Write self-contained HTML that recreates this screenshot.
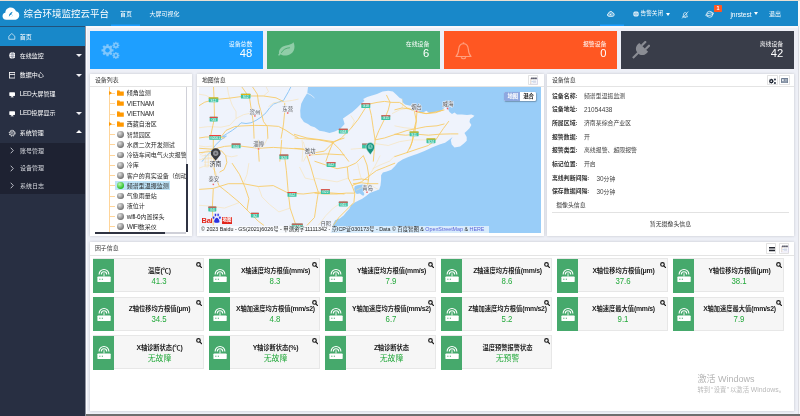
<!DOCTYPE html>
<html lang="zh-CN">
<head>
<meta charset="utf-8">
<title>综合环境监控云平台</title>
<style>
*{box-sizing:border-box;margin:0;padding:0}
html,body{width:800px;height:416px;overflow:hidden;background:#eef0f7;font-family:"Liberation Sans","Noto Sans CJK SC",sans-serif;color:#333;font-size:5.83px;line-height:1}
.abs,.abs *{position:absolute}
#root{position:relative;width:800px;height:416px;overflow:hidden;background:#eef0f7;will-change:transform}
#root>*{position:absolute}
.t{position:absolute;white-space:nowrap}
/* header */
#topline{left:0;top:0;width:800px;height:1px;background:#e9dfd2}
#header{left:0;top:1px;width:798px;height:25px;background:#1888c9}
#header .t{color:#fff}
#title{left:23.6px;top:7.6px;font-size:9.5px;color:#fff}
.nav{font-size:6px;top:9.7px}
/* sidebar */
#side{left:0;top:26px;width:85px;height:390px;background:#282f42}
#side .t{color:#fff;font-size:6px}
#side .act{position:absolute;left:0;top:0;width:85px;height:20px;background:#1888c9}
#side .sub{position:absolute;left:0;top:116.5px;width:85px;height:51px;background:#1e2232}
/* cards */
.card{top:31px;height:37.6px;width:173px}
.card .lab{position:absolute;right:10.8px;top:10.6px;font-size:5.9px;color:#fff;white-space:nowrap}
.card .num{position:absolute;right:10.9px;top:17.2px;font-size:11.2px;color:#fff;white-space:nowrap}
/* panels */
.panel{background:#fff;box-shadow:0 0 2.6px rgba(50,50,55,.22)}
.panel .hd{position:absolute;left:0;top:0;right:0;height:13px;border-bottom:0.5px solid #e4e4e4}
.panel .hd .t{left:4.8px;top:4.1px;font-size:5.9px;color:#333}
.hbtn{position:absolute;width:10px;height:9.6px;border:0.5px solid #e2e2e2;border-radius:0.8px;background:#fff}
</style>
</head>
<body>
<div id="root">
<!--MAINBG-->
<div id="rightstrip" style="left:798px;top:1px;width:2px;height:415px;background:#f8f8f8"></div><div style="left:798px;top:26px;width:1px;height:390px;background:#dcdde3"></div>
<div id="topline"></div>
<div id="header">
  <svg style="position:absolute;left:2.4px;top:6.4px" width="17.8" height="13.2" viewBox="0 0 34 26">
    <path d="M8 25 C3 25 0.5 21.5 0.5 18 C0.5 14.5 3 12 6 11.5 C6 5.5 10.5 1 16.5 1 C21.5 1 25.5 4 27 8.5 C31 9 33.5 12.5 33.5 16.5 C33.5 21.5 30 25 26 25 Z" fill="#fff"/>
    <path d="M13 19 C13 14 16 10.5 21 9.5 C19 11.5 18 13 18.5 15 C17 15 15 16.5 13 19 Z" fill="#1888c9"/>
    <path d="M16 19.5 C18.5 19 20.5 17 21 14.5 C21.5 17 20 19.5 16 19.5 Z" fill="#5bb0e0"/>
  </svg>
  <div class="t" id="title">综合环境监控云平台</div>
  <div class="t nav" style="left:120px">首页</div>
  <div class="t nav" style="left:149.5px">大屏可视化</div>
  <div style="position:absolute;left:111px;top:23px;width:29px;height:1px;background:#1b93e2"></div><div style="position:absolute;left:111px;top:24px;width:29px;height:1px;background:#1e9fff"></div>
  <div style="position:absolute;left:600px;top:23px;width:24px;height:1px;background:#1b93e2"></div><div style="position:absolute;left:600px;top:24px;width:24px;height:1px;background:#1e9fff"></div>
  <!-- cloud icon -->
  <svg style="position:absolute;left:607.4px;top:10.2px" width="7.6" height="5.9" viewBox="0 0 18 14" fill="rgba(255,255,255,.3)" stroke="#fff" stroke-width="2.1">
    <path d="M4.5 12.5 C2.5 12.5 1 11 1 9 C1 7.2 2.3 6 4 5.8 C4.3 3 6.3 1.2 9 1.2 C11.3 1.2 13.2 2.6 13.8 4.8 C15.8 5 17 6.5 17 8.5 C17 10.8 15.5 12.5 13.5 12.5 Z"/>
    <circle cx="8" cy="8" r="1.6" fill="#fff" stroke="none"/><circle cx="11.5" cy="7" r="1" fill="#fff" stroke="none"/>
  </svg>
  <!-- globe + alarm -->
  <svg style="position:absolute;left:632.5px;top:10.3px" width="6" height="6" viewBox="0 0 12 12"><circle cx="6" cy="6" r="5.5" fill="#fff"/><path d="M0.5 6h11M6 0.5c-3 3-3 8 0 11M6 0.5c3 3 3 8 0 11" stroke="#1888c9" stroke-width="0.9" fill="none"/></svg>
  <div class="t nav" style="left:640.6px;font-size:5.65px;top:10px">告警关闭</div>
  <div style="position:absolute;left:666.4px;top:11.9px;width:0;height:0;border-left:2.9px solid transparent;border-right:2.9px solid transparent;border-top:3.1px solid #fff"></div>
  <!-- bell slash -->
  <svg style="position:absolute;left:680.8px;top:9.6px" width="8" height="8" viewBox="0 0 18 18" fill="none" stroke="#fff" stroke-width="1.5" stroke-linecap="round"><path d="M4.5 12.5 C5.5 11 5.5 9 5.8 7 C6.2 4.8 7.5 3.5 9.5 3.5 C11.5 3.5 12.7 5 12.8 7 C12.9 9 13 11 14 12.5 Z"/><path d="M8 14.5 C8.5 15.5 10 15.5 10.5 14.5"/><path d="M3 16 L15.5 2"/></svg>
  <!-- planet -->
  <svg style="position:absolute;left:704.6px;top:9px" width="9.4" height="8.6" viewBox="0 0 22 20" fill="none" stroke="#fff" stroke-width="1.7"><circle cx="11" cy="10" r="7"/><ellipse cx="11" cy="10" rx="10" ry="2.6" transform="rotate(-14 11 10)" stroke-width="1.4"/></svg>
  <div style="position:absolute;left:714.1px;top:4px;width:8px;height:7.2px;background:#ff5722;border-radius:0.8px"></div>
  <div class="t" style="left:716.6px;top:5px;font-size:5.4px;font-weight:bold">1</div>
  <div class="t nav" style="left:730.4px;font-size:6.6px;top:10.9px">jnrstest</div>
  <div style="position:absolute;left:754.2px;top:11.4px;width:0;height:0;border-left:2.9px solid transparent;border-right:2.9px solid transparent;border-top:3.1px solid #fff"></div>
  <div class="t nav" style="left:769px">退出</div>
</div>
<div id="side">
  <div style="position:absolute;left:0;top:0;width:85px;height:1.2px;background:#21527c"></div><div style="position:absolute;left:0;top:1.1px;width:85px;height:18.7px;background:#1888c9"></div>
  <div class="sub"></div>
  <!-- icons -->
  <svg style="position:absolute;left:8.2px;top:7px" width="7.6" height="7" viewBox="0 0 15 14" fill="none" stroke="#fff" stroke-width="1.3" stroke-linejoin="round"><path d="M1.5 6.5 L7.5 1 L13.5 6.5 V12.5 H1.5 Z"/></svg>
  <svg style="position:absolute;left:8.6px;top:26.4px" width="6.8" height="6.8" viewBox="0 0 12 12"><circle cx="6" cy="6" r="5.6" fill="#fff"/><path d="M0.5 4h11M0.5 8h11M6 0.5c-2.6 3-2.6 8 0 11M6 0.5c2.6 3 2.6 8 0 11M6 0.5v11" stroke="#596078" stroke-width="0.65" fill="none"/></svg>
  <svg style="position:absolute;left:8.8px;top:46.2px" width="6.6" height="6.6" viewBox="0 0 12 12" fill="none" stroke="#fff" stroke-width="1.5"><rect x="1" y="1" width="10" height="10"/><path d="M1 4.5h10"/></svg>
  <svg style="position:absolute;left:8.8px;top:65.9px" width="6.3" height="5.7" viewBox="0 0 14 13"><rect x="0.5" y="0.5" width="13" height="8.5" rx="1" fill="#fff"/><rect x="5" y="9" width="4" height="2" fill="#fff"/><rect x="3.5" y="10.8" width="7" height="1.4" fill="#fff"/></svg>
  <svg style="position:absolute;left:8.8px;top:85.1px" width="6.3" height="5.7" viewBox="0 0 14 13"><rect x="0.5" y="0.5" width="13" height="8.5" rx="1" fill="#fff"/><rect x="5" y="9" width="4" height="2" fill="#fff"/><rect x="3.5" y="10.8" width="7" height="1.4" fill="#fff"/></svg>
  <svg style="position:absolute;left:7.7px;top:102.8px" width="8.4" height="8.4" viewBox="0 0 16 16" fill="none" stroke="#fff"><circle cx="8" cy="8" r="5.6" stroke-width="1.8" stroke-dasharray="2.4 2"/><circle cx="8" cy="8" r="4.3" stroke-width="1.2"/><circle cx="8" cy="8" r="1.7" stroke-width="1"/></svg>
  <div class="t" style="left:19.8px;top:7.6px">首页</div>
  <div class="t" style="left:19.8px;top:26.9px">在线监控</div>
  <div class="t" style="left:19.8px;top:46.2px">数据中心</div>
  <div class="t" style="left:19.8px;top:65.1px"><span style="font-size:6.5px;letter-spacing:-0.35px">LED</span>大屏管理</div>
  <div class="t" style="left:19.8px;top:84.3px"><span style="font-size:6.5px;letter-spacing:-0.35px">LED</span>投屏显示</div>
  <div class="t" style="left:19.8px;top:103.8px">系统管理</div>
  <div class="t" style="left:20px;top:122.2px;color:#d4d6dc">账号管理</div>
  <div class="t" style="left:20px;top:139.4px;color:#d4d6dc">设备管理</div>
  <div class="t" style="left:20px;top:156.6px;color:#d4d6dc">系统日志</div>
  <svg style="position:absolute;left:10px;top:121.4px" width="4" height="7" viewBox="0 0 8 14" fill="none" stroke="#e0e2e8" stroke-width="1.6"><path d="M1.5 1.5 L6.5 7 L1.5 12.5"/></svg>
  <svg style="position:absolute;left:10px;top:138.6px" width="4" height="7" viewBox="0 0 8 14" fill="none" stroke="#e0e2e8" stroke-width="1.6"><path d="M1.5 1.5 L6.5 7 L1.5 12.5"/></svg>
  <svg style="position:absolute;left:10px;top:155.8px" width="4" height="7" viewBox="0 0 8 14" fill="none" stroke="#e0e2e8" stroke-width="1.6"><path d="M1.5 1.5 L6.5 7 L1.5 12.5"/></svg>
  <div style="position:absolute;left:75.6px;top:28.4px;width:0;height:0;border-left:3.1px solid transparent;border-right:3.1px solid transparent;border-top:3.2px solid #f0f0f4"></div>
  <div style="position:absolute;left:75.6px;top:47.6px;width:0;height:0;border-left:3.1px solid transparent;border-right:3.1px solid transparent;border-top:3.2px solid #f0f0f4"></div>
  <div style="position:absolute;left:75.6px;top:86.0px;width:0;height:0;border-left:3.1px solid transparent;border-right:3.1px solid transparent;border-top:3.2px solid #f0f0f4"></div>
  <div style="position:absolute;left:75.6px;top:104.4px;width:0;height:0;border-left:3.1px solid transparent;border-right:3.1px solid transparent;border-bottom:3.2px solid #fff"></div>
</div>
<div style="left:85px;top:26px;width:0.6px;height:390px;background:#8f93a0"></div><div style="left:85.6px;top:26px;width:1.7px;height:390px;background:#fbfbfe"></div>
<div style="left:86.4px;top:26px;width:711.6px;height:2.4px;background:#f8f8fb"></div>
<div class="card" style="left:90.2px;background:#1e9fff">
  <svg style="position:absolute;left:10.4px;top:10px" width="20" height="19" viewBox="0 0 20 19">
    <g transform="translate(6.5 9.3)"><g stroke="#7fc6fc" stroke-width="2.3"><path d="M0 -6V6M-6 0H6M-4.25 -4.25L4.25 4.25M-4.25 4.25L4.25 -4.25"/></g><circle r="4.6" fill="#7fc6fc"/><circle r="2.2" fill="#1e9fff"/></g>
    <g transform="translate(14.9 4.3)"><g stroke="#7fc6fc" stroke-width="1.3"><path d="M0 -3.5V3.5M-3.5 0H3.5M-2.5 -2.5L2.5 2.5M-2.5 2.5L2.5 -2.5"/></g><circle r="2.6" fill="#7fc6fc"/><circle r="1.15" fill="#1e9fff"/></g>
    <g transform="translate(14.9 14.5)"><g stroke="#7fc6fc" stroke-width="1.3"><path d="M0 -3.5V3.5M-3.5 0H3.5M-2.5 -2.5L2.5 2.5M-2.5 2.5L2.5 -2.5"/></g><circle r="2.6" fill="#7fc6fc"/><circle r="1.15" fill="#1e9fff"/></g>
  </svg>
  <div class="lab">设备总数</div><div class="num">48</div>
</div>
<div class="card" style="left:267.2px;background:#46a96c">
  <svg style="position:absolute;left:9.6px;top:11.2px" width="18" height="15" viewBox="0 0 36 30">
    <path d="M3 27 C2 26 2.5 24.5 4 23.5 C3 16 8 9 18 7 C25 5.5 30 4 33 0.5 C37 9 35 19 27 24 C20 28 12 28 7 24.5 C6 26 5 27.5 3 27 Z" fill="#90cda8"/>
    <path d="M9 21 C12 15 18 12 25 11.5" stroke="#46a96c" stroke-width="1.8" fill="none" stroke-linecap="round"/>
  </svg>
  <div class="lab">在线设备</div><div class="num">6</div>
</div>
<div class="card" style="left:444.3px;background:#ff5722">
  <svg style="position:absolute;left:10.8px;top:10.6px" width="17" height="18" viewBox="0 0 34 36" fill="none" stroke="#ff9f7e" stroke-width="2.3" stroke-linejoin="round">
    <path d="M2 29 C6 25 7 20 7.5 14 C8 7 12 3.5 17 3.5 C22 3.5 26 7 26.5 14 C27 20 28 25 32 29 Z"/><path d="M12.5 30.5 C13.5 34.5 20.5 34.5 21.5 30.5"/><circle cx="17" cy="2.2" r="0.8" fill="#ff9f7e"/>
  </svg>
  <div class="lab">报警设备</div><div class="num">0</div>
</div>
<div class="card" style="left:621px;background:#393d49">
  <svg style="position:absolute;left:9.6px;top:10.4px" width="19" height="19" viewBox="0 0 38 38">
    <g transform="rotate(45 19 19)" fill="#8a8d94"><rect x="11.6" y="-2" width="4.4" height="13" rx="2.2"/><rect x="22" y="-2" width="4.4" height="13" rx="2.2"/><path d="M6.5 10 H31.5 V14 C31.5 21.5 26 26.5 19 26.5 C12 26.5 6.5 21.5 6.5 14 Z"/><rect x="16.9" y="25.5" width="4.2" height="15"/></g>
  </svg>
  <div class="lab">离线设备</div><div class="num">42</div>
</div>
<div class="panel" style="left:90.2px;top:73.8px;width:102px;height:162px">
 <div class="hd"><div class="t">设备列表</div></div>
 <div style="position:absolute;left:0;top:13.2px;width:96px;height:145px;overflow:hidden">
  <div style="position:absolute;left:19.2px;top:0;width:0.6px;height:145px;background:#ffd59a"></div>
  <div style="position:absolute;left:19.4px;top:6.00px;width:5.2px;height:0.6px;background:#ffd59a"></div>
  <div style="position:absolute;left:18.4px;top:4.00px;width:0;height:0;border-top:2.3px solid transparent;border-bottom:2.3px solid transparent;border-left:3px solid #ff9800"></div>
  <svg style="position:absolute;left:27.2px;top:3.20px" width="6.8" height="5.8" viewBox="0 0 13 11"><path d="M0 1.2 H4.6 L5.8 2.6 H13 V11 H0 Z" fill="#ff9800"/><path d="M0 0.4H4.8V2H0Z" fill="#ffb74d"/></svg>
  <div class="t" style="left:36.6px;top:3.50px;font-size:6px;line-height:6px;color:#2a2a2a">倾角监测</div>
  <div style="position:absolute;left:19.4px;top:16.27px;width:5.2px;height:0.6px;background:#ffd59a"></div>
  <svg style="position:absolute;left:27.2px;top:13.47px" width="6.8" height="5.8" viewBox="0 0 13 11"><path d="M0 1.2 H4.6 L5.8 2.6 H13 V11 H0 Z" fill="#ff9800"/><path d="M0 0.4H4.8V2H0Z" fill="#ffb74d"/></svg>
  <div class="t" style="left:36.6px;top:13.77px;font-size:6px;line-height:6px;color:#2a2a2a"><span style="font-size:6.6px;letter-spacing:-0.3px;line-height:0">VIETNAM</span></div>
  <div style="position:absolute;left:19.4px;top:26.54px;width:5.2px;height:0.6px;background:#ffd59a"></div>
  <svg style="position:absolute;left:27.2px;top:23.74px" width="6.8" height="5.8" viewBox="0 0 13 11"><path d="M0 1.2 H4.6 L5.8 2.6 H13 V11 H0 Z" fill="#ff9800"/><path d="M0 0.4H4.8V2H0Z" fill="#ffb74d"/></svg>
  <div class="t" style="left:36.6px;top:24.04px;font-size:6px;line-height:6px;color:#2a2a2a"><span style="font-size:6.6px;letter-spacing:-0.3px;line-height:0">VIETNAM</span></div>
  <div style="position:absolute;left:19.4px;top:36.81px;width:5.2px;height:0.6px;background:#ffd59a"></div>
  <div style="position:absolute;left:18.4px;top:34.81px;width:0;height:0;border-top:2.3px solid transparent;border-bottom:2.3px solid transparent;border-left:3px solid #ff9800"></div>
  <svg style="position:absolute;left:27.2px;top:34.01px" width="6.8" height="5.8" viewBox="0 0 13 11"><path d="M0 1.2 H4.6 L5.8 2.6 H13 V11 H0 Z" fill="#ff9800"/><path d="M0 0.4H4.8V2H0Z" fill="#ffb74d"/></svg>
  <div class="t" style="left:36.6px;top:34.31px;font-size:6px;line-height:6px;color:#2a2a2a">西藏自治区</div>
  <div style="position:absolute;left:19.4px;top:47.08px;width:5.2px;height:0.6px;background:#ffd59a"></div>
  <div style="position:absolute;left:27px;top:43.98px;width:6.8px;height:6.8px;border-radius:50%;background:radial-gradient(circle at 38% 32%,#e2e2e2,#6a6a6a 78%)"></div>
  <div class="t" style="left:36.6px;top:44.58px;font-size:6px;line-height:6px;color:#2a2a2a">智慧园区</div>
  <div style="position:absolute;left:19.4px;top:57.35px;width:5.2px;height:0.6px;background:#ffd59a"></div>
  <div style="position:absolute;left:27px;top:54.25px;width:6.8px;height:6.8px;border-radius:50%;background:radial-gradient(circle at 38% 32%,#e2e2e2,#6a6a6a 78%)"></div>
  <div class="t" style="left:36.6px;top:54.85px;font-size:6px;line-height:6px;color:#2a2a2a">水质二次开发测试</div>
  <div style="position:absolute;left:19.4px;top:67.62px;width:5.2px;height:0.6px;background:#ffd59a"></div>
  <div style="position:absolute;left:27px;top:64.52px;width:6.8px;height:6.8px;border-radius:50%;background:radial-gradient(circle at 38% 32%,#e2e2e2,#6a6a6a 78%)"></div>
  <div class="t" style="left:36.6px;top:65.12px;font-size:6px;line-height:6px;color:#2a2a2a">冷链车间电气火灾报警</div>
  <div style="position:absolute;left:19.4px;top:77.89px;width:5.2px;height:0.6px;background:#ffd59a"></div>
  <div style="position:absolute;left:27px;top:74.79px;width:6.8px;height:6.8px;border-radius:50%;background:radial-gradient(circle at 38% 32%,#e2e2e2,#6a6a6a 78%)"></div>
  <div class="t" style="left:36.6px;top:75.39px;font-size:6px;line-height:6px;color:#2a2a2a">冷库</div>
  <div style="position:absolute;left:19.4px;top:88.16px;width:5.2px;height:0.6px;background:#ffd59a"></div>
  <div style="position:absolute;left:27px;top:85.06px;width:6.8px;height:6.8px;border-radius:50%;background:radial-gradient(circle at 38% 32%,#e2e2e2,#6a6a6a 78%)"></div>
  <div class="t" style="left:36.6px;top:85.66px;font-size:6px;line-height:6px;color:#2a2a2a">客户的真实设备（创动</div>
  <div style="position:absolute;left:19.4px;top:98.43px;width:5.2px;height:0.6px;background:#ffd59a"></div>
  <div style="position:absolute;left:24.8px;top:94.03px;width:55.2px;height:9.4px;background:#bfe4f8"></div>
  <div style="position:absolute;left:27px;top:95.33px;width:6.8px;height:6.8px;border-radius:50%;background:radial-gradient(circle at 38% 32%,#b9f5b0,#18b818 78%)"></div>
  <div class="t" style="left:36.6px;top:95.93px;font-size:6px;line-height:6px;color:#2a2a2a">频谱型温振监测</div>
  <div style="position:absolute;left:19.4px;top:108.70px;width:5.2px;height:0.6px;background:#ffd59a"></div>
  <div style="position:absolute;left:27px;top:105.60px;width:6.8px;height:6.8px;border-radius:50%;background:radial-gradient(circle at 38% 32%,#e2e2e2,#6a6a6a 78%)"></div>
  <div class="t" style="left:36.6px;top:106.20px;font-size:6px;line-height:6px;color:#2a2a2a">气象雨量站</div>
  <div style="position:absolute;left:19.4px;top:118.97px;width:5.2px;height:0.6px;background:#ffd59a"></div>
  <div style="position:absolute;left:27px;top:115.87px;width:6.8px;height:6.8px;border-radius:50%;background:radial-gradient(circle at 38% 32%,#e2e2e2,#6a6a6a 78%)"></div>
  <div class="t" style="left:36.6px;top:116.47px;font-size:6px;line-height:6px;color:#2a2a2a">液位计</div>
  <div style="position:absolute;left:19.4px;top:129.24px;width:5.2px;height:0.6px;background:#ffd59a"></div>
  <div style="position:absolute;left:27px;top:126.14px;width:6.8px;height:6.8px;border-radius:50%;background:radial-gradient(circle at 38% 32%,#e2e2e2,#6a6a6a 78%)"></div>
  <div class="t" style="left:36.6px;top:126.74px;font-size:6px;line-height:6px;color:#2a2a2a"><span style="font-size:6.6px;letter-spacing:-0.3px;line-height:0">wifi-6</span>内置探头</div>
  <div style="position:absolute;left:19.4px;top:139.51px;width:5.2px;height:0.6px;background:#ffd59a"></div>
  <div style="position:absolute;left:27px;top:136.41px;width:6.8px;height:6.8px;border-radius:50%;background:radial-gradient(circle at 38% 32%,#e2e2e2,#6a6a6a 78%)"></div>
  <div class="t" style="left:36.6px;top:137.01px;font-size:6px;line-height:6px;color:#2a2a2a"><span style="font-size:6.6px;letter-spacing:-0.3px;line-height:0">WiFi</span>数采仪</div>
 </div>
 <div style="position:absolute;left:96.2px;top:13.6px;width:1px;height:77px;background:#cfd0d8"></div>
 <div style="position:absolute;left:95.8px;top:90.4px;width:1.8px;height:67.8px;background:#2f3342"></div>
 <div style="position:absolute;left:5px;top:158.5px;width:70px;height:1.4px;background:#2f3342"></div>
 <div style="position:absolute;left:75px;top:158.6px;width:21px;height:1.2px;background:#cfd0d8"></div>
</div>
<div class="panel" style="left:197.2px;top:73.8px;width:346.4px;height:162px">
 <div class="hd"><div class="t">地图信息</div></div>
 <div class="hbtn" style="left:330.5px;top:1.5px;width:10.5px;height:10.2px"><svg style="position:absolute;left:1.3px;top:1.2px" width="7.8" height="7.4" viewBox="0 0 15.6 14.8"><rect x="0.8" y="2.6" width="14" height="11.4" fill="#fff" stroke="#c9c3e6" stroke-width="1"/><rect x="1.3" y="3" width="1.2" height="10.6" fill="#f3d9b0"/><path d="M2.6 1h2.6v3.6H2.6zM6.6 1h2.6v3.6H6.6zM10.6 1h2.6v3.6h-2.6z" fill="#2a2d3a"/><rect x="6" y="7" width="6.6" height="4.6" fill="#d5dae8"/><rect x="3.2" y="7.6" width="2" height="3" fill="#a9c4ec"/></svg></div>
<svg style="position:absolute;left:2.3px;top:13.6px" width="341.6" height="145.6" viewBox="199.5 87.4 341.6 145.6" font-family="'Liberation Sans','Noto Sans CJK SC',sans-serif">
<rect x="199.5" y="87.4" width="342" height="146" fill="#eff3fc"/>
<polygon points="308.5,87.4 307.8,93.4 304.4,98.8 301.7,104.2 300.7,110.9 301.1,117.6 304.4,122.4 308.5,124.4 311.2,126.4 315.2,127.7 319.9,131.1 324.6,131.8 330.0,133.5 335.4,131.8 340.8,129.1 345.1,124.4 343.5,119.0 348.2,115.6 352.9,112.3 357.6,108.2 361.6,104.2 365.0,101.5 363.7,99.5 367.7,97.5 372.5,95.8 377.5,94.3 383.1,91.9 388.8,91.1 393.4,91.9 397.2,95.3 400.0,98.2 402.5,99.3 402.8,102.4 405.6,104.9 410.6,106.1 413.1,104.3 414.4,106.8 418.8,111.1 420.6,113.6 424.4,112.4 426.9,111.1 430.0,113.6 433.8,113.0 437.5,112.0 441.3,111.1 443.8,109.3 445.6,106.8 448.1,108.6 450.0,112.4 452.5,114.3 455.0,113.0 457.5,114.9 462.5,114.9 467.5,115.3 471.9,114.9 475.0,116.1 473.1,118.0 470.6,119.3 470.0,122.4 471.9,125.5 470.0,128.6 467.5,131.1 465.0,133.5 467.2,137.4 467.2,141.2 464.4,144.0 460.6,146.8 455.0,147.8 452.2,144.9 451.3,140.3 453.1,137.4 449.4,140.3 445.6,143.1 440.0,144.9 432.5,147.8 425.0,151.5 417.5,154.3 414.4,155.5 408.8,157.5 403.0,159.8 398.4,163.0 395.6,166.3 391.9,170.1 387.2,171.9 383.4,172.9 381.6,175.7 381.6,180.4 381.0,186.0 379.7,189.8 375.0,191.6 370.3,193.5 366.6,196.3 362.8,199.1 359.1,201.0 355.3,202.9 351.6,205.7 349.7,209.4 346.9,212.3 344.1,216.0 340.3,218.8 335.6,220.7 333.8,224.4 332.8,228.0 331.0,233.5 542.0,233.5 542.0,87.4" fill="#99cdf8"/>
<polygon points="355.3,186.7 357.8,185.7 361.3,185.2 363.8,184.7 364.8,186.7 363.3,189.2 363.8,191.8 364.8,194.3 364.5,196.0 363.0,196.0 360.3,193.8 357.3,194.3 355.3,192.3 354.7,189.2" fill="#99cdf8"/>
<path d="M307.6 93.6 L311.5 95.4 L315 98.4" fill="none" stroke="#eff3fc" stroke-width="0.7"/>
<polyline points="291.5,87.0 289.0,92.0 286.5,96.4 284.0,100.8 279.0,102.6 274.0,104.5 270.2,108.2 266.5,113.2 261.5,117.6 256.5,120.8 251.5,123.2 246.5,123.9 241.5,123.2 237.8,127.0 232.8,130.8 227.8,133.9 222.8,137.0 226.9,136.5 221.3,140.3 215.6,145.9 211.9,151.5 206.3,157.1 202.5,162.0" fill="none" stroke="#8fc7f6" stroke-width="1"/>
<g fill="none" stroke="#f9dfa8" stroke-width="0.55">
<polyline points="199.0,128.2 209.0,127.0 221.5,127.6 230.2,125.8 236.5,118.9 244.0,115.1 252.8,113.2"/>
<polyline points="266.5,87.0 269.0,92.0 264.0,96.4"/>
<polyline points="227.8,87.0 229.0,94.5 230.2,98.5 232.8,105.8 236.5,112.0 236.5,118.9"/>
<polyline points="199.0,94.5 206.5,95.8 214.0,100.1"/>
<polyline points="269.0,107.0 274.0,103.2 284.0,102.0 292.8,100.8 299.0,99.5"/>
<polyline points="268.1,138.4 264.4,145.9 258.8,148.7"/>
<polyline points="303.8,142.1 307.5,155.3 303.8,162.0"/>
<polyline points="200.6,155.3 206.3,151.5 213.8,149.6"/>
<polyline points="202.5,159.0 210.0,158.1 217.5,159.0 219.4,162.0"/>
<polyline points="392.5,114.0 400.0,110.3 409.4,108.4 416.9,112.1"/>
<polyline points="351.3,149.6 362.5,148.7 370.0,149.6"/>
<polyline points="375.6,144.0 388.8,145.9 400.0,142.1 411.3,140.3 426.3,140.3 433.8,142.1"/>
<polyline points="302.5,140.3 303.4,149.6 302.5,162.0"/>
<polyline points="351.3,115.9 355.0,121.5 351.3,129.0"/>
<polyline points="402.5,99.0 403.4,104.6 402.5,108.4"/>
<polyline points="395.0,126.2 404.4,128.1 413.8,129.0"/>
<polyline points="199.7,205.7 211.9,206.6 225.0,208.5 240.0,202.9"/>
<polyline points="249.4,163.5 247.5,174.8 243.8,184.1"/>
<polyline points="345.0,201.0 333.8,208.5 326.3,216.0 318.8,225.8"/>
<polyline points="258.8,186.9 262.5,197.3 270.0,204.8 279.4,212.3 290.6,208.5"/>
<polyline points="300.0,167.3 305.6,178.5 315.0,180.4"/>
<polyline points="369.4,176.6 375.0,167.3 378.8,159.8 380.6,156.0"/>
<polyline points="315.0,178.5 326.3,180.4 337.5,182.3 348.8,178.5"/>
<polyline points="395.6,156.0 390.0,161.6 380.6,165.4 373.1,169.1"/>
<polyline points="356.6,190.7 362.8,187.9"/>
<polyline points="358.1,163.5 360.0,172.9 361.9,179.4"/>
<polyline points="369.4,184.1 375.0,187.9 378.8,189.8"/>
<polyline points="202.0,156.4 210.0,155.4 218.0,156.2"/>
<polyline points="203.5,159.6 213.0,158.8"/>
<polyline points="204.5,162.6 213.5,162.4"/>
<polyline points="204.5,165.4 213.0,166.0"/>
<polyline points="205.8,154.6 205.8,166.6"/>
<polyline points="208.8,154.2 208.8,167.4"/>
<polyline points="211.8,155.4 212.0,168.4"/>
<polyline points="213.0,168.0 216.0,172.4 218.4,178.6"/>
<polyline points="199.5,160.2 203.5,159.6"/>
<polyline points="199.5,168.6 204.0,166.8 208.8,167.4"/>
<polyline points="226.2,156.0 232.0,157.2 238.0,156.0"/>
<polyline points="199.5,146.2 206.0,147.2 213.0,146.4"/>
</g><g fill="none" stroke="#f8c95e" stroke-width="0.85">
<polyline points="199.0,106.4 205.2,102.6 214.0,100.1 230.2,98.5 245.9,96.4 264.0,96.4 276.5,98.2 284.0,102.0"/>
<polyline points="214.0,87.0 214.6,100.1 215.0,118.2 213.4,125.8 211.5,134.5 210.9,139.0"/>
<polyline points="242.1,87.0 246.5,93.2 250.2,99.5 251.5,108.2 252.8,115.8 254.0,124.5 254.6,139.0"/>
<polyline points="252.8,87.0 257.8,94.5 259.0,103.2 261.5,112.0 264.0,122.0 267.8,127.0 268.4,139.0"/>
<polyline points="220.2,139.0 226.5,130.8 235.2,127.0 241.5,126.4 255.2,125.8 267.8,126.0 279.0,126.8 286.5,130.8 294.0,135.8 299.0,138.2"/>
<polyline points="285.2,103.2 285.2,112.0 284.0,124.5 282.8,132.0 281.5,139.0"/>
<polyline points="199.7,148.7 213.8,149.6 225.0,146.8 236.3,145.9 258.8,148.7 273.8,147.8 288.8,148.7 303.8,149.6 311.3,155.3 326.3,154.3 345.0,155.3"/>
<polyline points="258.8,140.3 258.8,148.7 259.7,162.0"/>
<polyline points="282.2,140.3 281.3,151.5 280.3,162.0"/>
<polyline points="294.4,134.6 307.5,138.4 322.5,140.3 333.8,142.1 345.0,138.4"/>
<polyline points="333.8,142.1 330.0,151.5 326.3,162.0"/>
<polyline points="199.7,138.4 206.3,137.4 215.6,137.4 225.0,138.4"/>
<polyline points="213.8,136.5 213.8,149.6 214.7,162.0"/>
<polyline points="295.0,138.4 306.3,139.3 319.4,140.3 333.4,143.1 341.9,138.4 351.3,129.0 358.8,119.6 365.3,109.3 369.1,104.6"/>
<polyline points="369.1,104.6 371.9,115.9 373.8,129.0 375.6,140.3 374.7,151.5 373.8,162.0"/>
<polyline points="369.1,104.6 377.5,102.8 385.0,101.8 392.5,102.8 400.0,102.8 402.8,104.6"/>
<polyline points="386.9,95.3 390.6,102.8 388.8,110.3 385.0,119.6 379.4,130.9 375.6,140.3"/>
<polyline points="375.6,140.3 385.0,138.4 396.3,134.6 407.5,130.9 416.9,129.0 426.3,127.1 437.5,126.2 445.0,124.3"/>
<polyline points="415.0,112.1 416.9,121.5 415.0,134.6 411.3,145.9 407.5,153.4"/>
<polyline points="333.4,143.1 340.0,149.6 345.6,157.1 349.4,162.0"/>
<polyline points="295.0,148.7 304.4,149.6 313.8,153.4 325.0,151.5 333.4,143.1"/>
<polyline points="402.8,104.6 407.5,108.4 416.9,112.1 426.3,114.0 437.5,112.1 445.0,110.3"/>
<polyline points="395.0,110.3 402.5,108.4 410.0,109.3 417.5,112.1 426.9,114.0 436.3,113.1 443.8,110.3"/>
<polyline points="417.5,112.1 416.6,121.5 413.8,132.8 412.8,142.1 410.0,149.6"/>
<polyline points="395.0,134.6 406.3,135.6 417.5,134.6 428.8,135.6 440.0,134.6 451.3,134.3 458.8,134.3"/>
<polyline points="449.4,121.5 443.8,129.0 440.0,134.6 436.3,140.3 428.8,145.9 417.5,149.6 406.3,153.4 395.0,157.1"/>
<polyline points="199.7,189.8 213.8,188.8 228.8,184.1 243.8,184.1 258.8,186.9 273.8,186.0 288.8,193.5 303.8,194.4 318.8,192.6 333.8,193.5 345.0,194.4"/>
<polyline points="285.0,156.0 286.9,171.0 288.8,193.5 290.6,208.5 296.3,225.4"/>
<polyline points="213.8,163.5 215.6,174.8 219.4,186.0 228.8,193.5 240.0,202.9 249.4,212.3 258.8,221.6 264.4,225.8"/>
<polyline points="232.5,163.5 240.0,174.8 245.6,187.9 249.4,199.1 247.5,210.4"/>
<polyline points="307.5,156.0 311.3,167.3 315.0,180.4 318.8,192.6 316.9,204.8 315.0,217.9 307.5,225.8"/>
<polyline points="213.8,188.8 212.8,208.5 213.8,225.8"/>
<polyline points="315.0,161.6 326.3,165.4 337.5,169.1 347.8,167.3 356.3,163.5 363.8,156.0"/>
<polyline points="347.8,167.3 348.8,178.5 352.5,186.0 355.3,193.5 354.4,202.9 346.9,210.4 339.4,217.9 333.8,225.8"/>
<polyline points="363.8,156.0 367.5,165.4 369.4,176.6 368.4,184.1 365.6,191.6"/>
<polyline points="315.0,193.5 324.4,194.4 337.5,194.4 346.9,193.5 355.3,193.5"/>
<polyline points="352.5,186.0 361.9,182.3 369.4,176.6 376.9,171.0 386.3,167.3 395.6,163.5"/>
<polyline points="353.4,180.4 361.9,179.4 369.4,180.4"/>
<polyline points="353.4,184.1 361.9,183.2 369.4,184.1 378.8,184.1"/>
<polyline points="199.5,153.2 206.0,152.4 214.0,151.8 222.0,151.2"/>
<polyline points="222.0,151.2 226.2,156.0 227.4,163.0 224.6,170.0 220.0,172.6"/>
</g>
<rect x="209.2" y="97.8" width="9.6" height="4.8" rx="0.6" fill="#40c4a4"/><rect x="209.2" y="97.8" width="9.6" height="1.1" fill="#f5b400"/><text x="214.0" y="102.0" font-size="3.3" fill="#fff" text-anchor="middle">S12</text>
<rect x="241.4" y="94.2" width="9.6" height="4.8" rx="0.6" fill="#40c4a4"/><rect x="241.4" y="94.2" width="9.6" height="1.1" fill="#f5b400"/><text x="246.2" y="98.4" font-size="3.3" fill="#fff" text-anchor="middle">S12</text>
<rect x="210.2" y="117.2" width="8" height="4.8" rx="0.6" fill="#40c4a4"/><rect x="210.2" y="117.2" width="8" height="1.1" fill="#f0413c"/><text x="214.2" y="121.4" font-size="3.3" fill="#fff" text-anchor="middle">G3</text>
<rect x="209.8" y="135.4" width="11.5" height="4.8" rx="0.6" fill="#40c4a4"/><rect x="209.8" y="135.4" width="11.5" height="1.1" fill="#f0413c"/><text x="215.6" y="139.6" font-size="3.3" fill="#fff" text-anchor="middle">G2001</text>
<rect x="232.1" y="143.9" width="9" height="4.8" rx="0.6" fill="#40c4a4"/><rect x="232.1" y="143.9" width="9" height="1.1" fill="#f0413c"/><text x="236.6" y="148.1" font-size="3.3" fill="#fff" text-anchor="middle">G20</text>
<rect x="279.9" y="154.9" width="9" height="4.8" rx="0.6" fill="#40c4a4"/><rect x="279.9" y="154.9" width="9" height="1.1" fill="#f0413c"/><text x="284.4" y="159.1" font-size="3.3" fill="#fff" text-anchor="middle">G20</text>
<rect x="339.3" y="129.1" width="9" height="4.8" rx="0.6" fill="#40c4a4"/><rect x="339.3" y="129.1" width="9" height="1.1" fill="#f0413c"/><text x="343.8" y="133.3" font-size="3.3" fill="#fff" text-anchor="middle">G18</text>
<rect x="361.8" y="103.7" width="9" height="4.8" rx="0.6" fill="#40c4a4"/><rect x="361.8" y="103.7" width="9" height="1.1" fill="#f0413c"/><text x="366.3" y="107.9" font-size="3.3" fill="#fff" text-anchor="middle">G18</text>
<rect x="381.8" y="115.7" width="9" height="4.8" rx="0.6" fill="#40c4a4"/><rect x="381.8" y="115.7" width="9" height="1.1" fill="#f0413c"/><text x="386.3" y="119.9" font-size="3.3" fill="#fff" text-anchor="middle">G15</text>
<rect x="410.1" y="131.9" width="9" height="4.8" rx="0.6" fill="#40c4a4"/><rect x="410.1" y="131.9" width="9" height="1.1" fill="#f5b400"/><text x="414.6" y="136.1" font-size="3.3" fill="#fff" text-anchor="middle">S11</text>
<rect x="427.0" y="138.8" width="9" height="4.8" rx="0.6" fill="#40c4a4"/><rect x="427.0" y="138.8" width="9" height="1.1" fill="#f5b400"/><text x="431.5" y="143.0" font-size="3.3" fill="#fff" text-anchor="middle">S24</text>
<rect x="327.1" y="162.6" width="9" height="4.8" rx="0.6" fill="#40c4a4"/><rect x="327.1" y="162.6" width="9" height="1.1" fill="#f0413c"/><text x="331.6" y="166.8" font-size="3.3" fill="#fff" text-anchor="middle">G22</text>
<rect x="288.0" y="192.4" width="9" height="4.8" rx="0.6" fill="#40c4a4"/><rect x="288.0" y="192.4" width="9" height="1.1" fill="#f0413c"/><text x="292.5" y="196.6" font-size="3.3" fill="#fff" text-anchor="middle">G22</text>
<rect x="321.4" y="189.6" width="9" height="4.8" rx="0.6" fill="#40c4a4"/><rect x="321.4" y="189.6" width="9" height="1.1" fill="#f0413c"/><text x="325.9" y="193.8" font-size="3.3" fill="#fff" text-anchor="middle">G22</text>
<rect x="339.3" y="202.0" width="9" height="4.8" rx="0.6" fill="#40c4a4"/><rect x="339.3" y="202.0" width="9" height="1.1" fill="#f0413c"/><text x="343.8" y="206.2" font-size="3.3" fill="#fff" text-anchor="middle">G15</text>
<rect x="208.8" y="207.0" width="8" height="4.8" rx="0.6" fill="#40c4a4"/><rect x="208.8" y="207.0" width="8" height="1.1" fill="#f0413c"/><text x="212.8" y="211.2" font-size="3.3" fill="#fff" text-anchor="middle">G3</text>
<rect x="251.4" y="213.2" width="8" height="4.8" rx="0.6" fill="#40c4a4"/><rect x="251.4" y="213.2" width="8" height="1.1" fill="#f0413c"/><text x="255.4" y="217.4" font-size="3.3" fill="#fff" text-anchor="middle">G2</text>
<rect x="292.3" y="224.0" width="11" height="4.8" rx="0.6" fill="#40c4a4"/><rect x="292.3" y="224.0" width="11" height="1.1" fill="#f0413c"/><text x="297.8" y="228.2" font-size="3.3" fill="#fff" text-anchor="middle">G1511</text>
<g font-size="5.4" fill="#555" text-anchor="middle" stroke="#eff3fc" stroke-width="0.9" paint-order="stroke">
<text x="255.4" y="114.0">滨州</text>
<text x="288.2" y="111.2">东营</text>
<text x="259.1" y="146.8">淄博</text>
<text x="310.7" y="153.0">潍坊</text>
<text x="214.3" y="181.9">泰安</text>
<text x="417.1" y="109.3">烟台</text>
<text x="448.5" y="106.8">威海</text>
<text x="368.1" y="190.2">青岛</text>
<text x="326.3" y="226.1">日照</text>
</g>
<circle cx="255.4" cy="116.3" r="0.9" fill="#e8474a" stroke="#fff" stroke-width="0.3"/>
<circle cx="288.2" cy="113.4" r="0.9" fill="#e8474a" stroke="#fff" stroke-width="0.3"/>
<circle cx="259.1" cy="149.3" r="0.9" fill="#e8474a" stroke="#fff" stroke-width="0.3"/>
<circle cx="310.3" cy="155.6" r="0.9" fill="#e8474a" stroke="#fff" stroke-width="0.3"/>
<circle cx="213.8" cy="184.7" r="0.9" fill="#e8474a" stroke="#fff" stroke-width="0.3"/>
<circle cx="417.1" cy="111.6" r="0.9" fill="#e8474a" stroke="#fff" stroke-width="0.3"/>
<circle cx="448.1" cy="108.9" r="0.9" fill="#e8474a" stroke="#fff" stroke-width="0.3"/>
<circle cx="367.5" cy="192.6" r="0.9" fill="#e8474a" stroke="#fff" stroke-width="0.3"/>
<path d="M216.2 161.2 C213.7 157.4 211.3 156.2 211.3 153.6 A4.9 4.9 0 0 1 221.1 153.6 C221.1 156.2 218.7 157.4 216.2 161.2Z" fill="#3a3c41"/><circle cx="216.2" cy="153.7" r="2.7" fill="#8f9196"/><circle cx="216.2" cy="153.7" r="1" fill="#55575c"/>
<text x="216" y="166.3" font-size="5.8" fill="#333" text-anchor="middle" stroke="#eff3fc" stroke-width="0.8" paint-order="stroke">济南</text>
<rect x="362.6" y="144" width="6" height="4.8" fill="#40c4a4"/><rect x="362.6" y="144" width="6" height="0.9" fill="#e8574f"/>
<path d="M370.8 155.2 C368.6 151.6 366.5 150.3 366.5 147.3 A4.3 4.3 0 0 1 375.1 147.3 C375.1 150.3 373 151.6 370.8 155.2Z" fill="#15917d" stroke="#f4f8fb" stroke-width="0.5"/><circle cx="370.8" cy="147.2" r="2.5" fill="#74cab8"/><path d="M370.8 145.6v1.8l1.2 0.9" stroke="#15917d" stroke-width="0.7" fill="none"/>
</svg>
 <div style="position:absolute;left:307px;top:18.1px;width:31.8px;height:8.9px;border-radius:1.2px;box-shadow:0.6px 0.8px 1.2px rgba(0,0,0,.35);overflow:hidden;background:#fff">
  <div style="position:absolute;left:0;top:0;width:15.9px;height:8.9px;background:#8ea8e0"></div>
  <div class="t" style="left:3.2px;top:1.7px;font-size:5.4px;font-weight:bold;color:#fff">地图</div>
  <div class="t" style="left:19px;top:1.7px;font-size:5.4px;font-weight:bold;color:#111">混合</div>
 </div>
 <div class="t" style="left:4.4px;top:142.8px;font-size:7.5px;font-weight:bold;color:#e1251b;letter-spacing:-0.3px;font-family:'Liberation Sans',sans-serif;text-shadow:0 0 0.6px #fff">Bai</div>
 <svg style="position:absolute;left:14.8px;top:139.4px" width="9.4" height="10.8" viewBox="0 0 19 22" fill="#2932e1" stroke="#fff" stroke-width="0.8"><ellipse cx="3.2" cy="9.5" rx="2.3" ry="3"/><ellipse cx="7" cy="4" rx="2.2" ry="3"/><ellipse cx="12.4" cy="4" rx="2.2" ry="3"/><ellipse cx="16" cy="9.5" rx="2.3" ry="3"/><path d="M9.6 9 C12.5 9 15.5 14 15.5 17 C15.5 20 13 20.5 9.6 20.5 C6.2 20.5 3.8 20 3.8 17 C3.8 14 6.8 9 9.6 9Z"/></svg>
 <div style="position:absolute;left:24.5px;top:143.6px;width:10px;height:6.3px;background:#e1251b;border-radius:0.6px"></div>
 <div class="t" style="left:25.3px;top:144.4px;font-size:4.4px;font-weight:bold;color:#fff">地图</div>
 <div style="position:absolute;left:2.4px;top:152px;width:289.4px;height:6.8px;background:rgba(255,255,255,.62)"></div>
 <div class="t" style="left:3.8px;top:152.9px;font-size:5.35px;color:#222">© 2023 Baidu - GS(2021)6026号 - 甲测资字11111342 - 京ICP证030173号 - Data © 百度智图 &amp; <span style="color:#5b62d8">OpenStreetMap</span> &amp; <span style="color:#5b62d8">HERE</span></div>
</div>
<div class="panel" style="left:547.2px;top:73.8px;width:246.6px;height:162px">
 <div class="hd"><div class="t">设备信息</div></div>
  <div class="hbtn" style="left:220.1px;top:1.3px;width:10.4px;height:9.9px"><svg style="position:absolute;left:0.4px;top:1.9px" width="7.6" height="6.4" viewBox="0 0 15.2 12.8"><circle cx="4.6" cy="6.4" r="3" fill="none" stroke="#1c2230" stroke-width="2.4"/><path d="M4.6 1.2v10.4M-0.6 6.4h10.4M0.9 2.7l7.4 7.4M0.9 10.1l7.4-7.4" stroke="#1c2230" stroke-width="1.1"/><circle cx="4.6" cy="6.4" r="1.5" fill="#fff"/><circle cx="11.9" cy="3" r="2" fill="#1c2230"/><circle cx="11.9" cy="3" r="0.7" fill="#9db4dd"/><circle cx="11.9" cy="9.8" r="2" fill="#1c2230"/><circle cx="11.9" cy="9.8" r="0.7" fill="#9db4dd"/></svg></div>
 <div class="hbtn" style="left:231.8px;top:1.3px;width:10.8px;height:9.9px"><svg style="position:absolute;left:1px;top:1.7px" width="7.4" height="5" viewBox="0 0 15.2 10.4"><rect x="0" y="0" width="15.2" height="10.4" rx="0.8" fill="#6f7d92"/><rect x="2" y="2.4" width="3.6" height="4" fill="#e8ecf2"/><path d="M7.4 3h5.6M7.4 5.4h5.6M2 8.2h11" stroke="#e8ecf2" stroke-width="1"/></svg></div>
<div class="t" style="left:4.8px;top:20.1px;font-size:5.9px;font-weight:bold;color:#333">设备名称:</div><div class="t" style="left:36.8px;top:20.1px;font-size:5.9px;color:#444">频谱型温振监测</div>
 <div class="t" style="left:4.8px;top:33.7px;font-size:5.9px;font-weight:bold;color:#333">设备地址:</div><div class="t" style="left:36.8px;top:33.7px;font-size:6.4px;margin-top:-0.4px;color:#444">21054438</div>
 <div class="t" style="left:4.8px;top:47.5px;font-size:5.9px;font-weight:bold;color:#333">所属区域:</div><div class="t" style="left:36.8px;top:47.5px;font-size:5.9px;color:#444">济南某综合产业区</div>
 <div class="t" style="left:4.8px;top:61.1px;font-size:5.9px;font-weight:bold;color:#333">报警数据:</div><div class="t" style="left:36.8px;top:61.1px;font-size:5.9px;color:#444">开</div>
 <div class="t" style="left:4.8px;top:74.7px;font-size:5.9px;font-weight:bold;color:#333">报警类型:</div><div class="t" style="left:36.8px;top:74.7px;font-size:5.9px;color:#444">离线报警、超限报警</div>
 <div class="t" style="left:4.8px;top:88.4px;font-size:5.9px;font-weight:bold;color:#333">标记位置:</div><div class="t" style="left:36.8px;top:88.4px;font-size:5.9px;color:#444">开启</div>
 <div class="t" style="left:4.8px;top:102.0px;font-size:5.9px;font-weight:bold;color:#333">离线判断间隔:</div><div class="t" style="left:49.3px;top:102.0px;font-size:5.9px;color:#444"><span style="font-size:6.4px">30</span>分钟</div>
 <div class="t" style="left:4.8px;top:115.6px;font-size:5.9px;font-weight:bold;color:#333">保存数据间隔:</div><div class="t" style="left:49.3px;top:115.6px;font-size:5.9px;color:#444"><span style="font-size:6.4px">30</span>分钟</div>
 <div class="t" style="left:9px;top:129.2px;font-size:5.9px;color:#333">摄像头信息</div>
 <div style="position:absolute;left:4.8px;top:138.4px;width:237px;height:0.5px;background:#e2e2e2"></div>
 <div class="t" style="left:0;width:246.6px;text-align:center;top:147.8px;font-size:5.9px;color:#333">暂无摄像头信息</div>
</div>
<div class="panel" style="left:90.2px;top:241.6px;width:703.6px;height:169.2px">
 <div class="hd" style="height:14.6px"><div class="t" style="top:4.5px">因子信息</div></div>
 <div class="hbtn" style="left:675.6px;top:1.5px;width:10.5px;height:10.6px"><svg style="position:absolute;left:2px;top:3.2px" width="6" height="4.4" viewBox="0 0 12 8.8"><path d="M0 1.7h12M0 7.1h12" stroke="#23262f" stroke-width="2.9"/><path d="M0 4.4h12" stroke="#8a8d96" stroke-width="1"/></svg></div>
 <div class="hbtn" style="left:688.4px;top:1.5px;width:10.7px;height:10.6px"><svg style="position:absolute;left:1.3px;top:1.4px" width="7.8" height="7.4" viewBox="0 0 15.6 14.8"><rect x="0.8" y="2.6" width="14" height="11.4" fill="#fff" stroke="#c9c3e6" stroke-width="1"/><rect x="1.3" y="3" width="1.2" height="10.6" fill="#f3d9b0"/><path d="M2.6 1h2.6v3.6H2.6zM6.6 1h2.6v3.6H6.6zM10.6 1h2.6v3.6h-2.6z" fill="#2a2d3a"/><rect x="6" y="7" width="6.6" height="4.6" fill="#d5dae8"/><rect x="3.2" y="7.6" width="2" height="3" fill="#a9c4ec"/></svg></div>
 <div style="position:absolute;left:2.8px;top:16.80px;width:111.2px;height:33.9px;background:#f6f6f6;border:0.5px solid #e7e7e7">
  <div style="position:absolute;left:-0.5px;top:-0.5px;width:20.9px;height:33.9px;background:#46a96c"><svg style="position:absolute;left:3.6px;top:8.6px" width="14" height="16" viewBox="0 0 28 32"><g fill="none" stroke="#fff" stroke-width="2.2" stroke-linecap="butt"><path d="M4.2 14.8 A9.8 9.8 0 0 1 23.8 14.8"/><path d="M8.6 14.8 A5.4 5.4 0 0 1 19.4 14.8"/><path d="M14 12.6V19" stroke-width="1.8"/></g><rect x="0.8" y="18.8" width="26.6" height="11.4" rx="1.8" fill="#fff"/><rect x="4.6" y="23.4" width="2.2" height="2.2" fill="#46a96c"/><rect x="9.6" y="23.4" width="2.2" height="2.2" fill="#46a96c"/></svg></div><svg style="position:absolute;left:101.8px;top:2.2px" width="6.2" height="6.2" viewBox="0 0 11 11" fill="none" stroke="#1a1a1a" stroke-width="2.1"><circle cx="4.4" cy="4.4" r="3.2"/><path d="M6.8 6.8L10.2 10.2" stroke-linecap="round"/></svg>
  <div class="t" style="left:20.5px;width:90px;text-align:center;top:8.5px;font-size:6.25px;line-height:6.25px;height:6.25px;font-weight:bold;color:#222">温度<span style="font-size:6.9px;letter-spacing:-0.28px">(</span>℃<span style="font-size:6.9px;letter-spacing:-0.28px">)</span></div>
  <div class="t" style="left:20.5px;width:90px;text-align:center;font-size:8.7px;top:17.6px;transform:scaleX(0.9);color:#22a83a">41.3</div>
 </div>
 <div style="position:absolute;left:118.8px;top:16.80px;width:111.2px;height:33.9px;background:#f6f6f6;border:0.5px solid #e7e7e7">
  <div style="position:absolute;left:-0.5px;top:-0.5px;width:20.9px;height:33.9px;background:#46a96c"><svg style="position:absolute;left:3.6px;top:8.6px" width="14" height="16" viewBox="0 0 28 32"><g fill="none" stroke="#fff" stroke-width="2.2" stroke-linecap="butt"><path d="M4.2 14.8 A9.8 9.8 0 0 1 23.8 14.8"/><path d="M8.6 14.8 A5.4 5.4 0 0 1 19.4 14.8"/><path d="M14 12.6V19" stroke-width="1.8"/></g><rect x="0.8" y="18.8" width="26.6" height="11.4" rx="1.8" fill="#fff"/><rect x="4.6" y="23.4" width="2.2" height="2.2" fill="#46a96c"/><rect x="9.6" y="23.4" width="2.2" height="2.2" fill="#46a96c"/></svg></div><svg style="position:absolute;left:101.8px;top:2.2px" width="6.2" height="6.2" viewBox="0 0 11 11" fill="none" stroke="#1a1a1a" stroke-width="2.1"><circle cx="4.4" cy="4.4" r="3.2"/><path d="M6.8 6.8L10.2 10.2" stroke-linecap="round"/></svg>
  <div class="t" style="left:20.5px;width:90px;text-align:center;top:8.5px;font-size:6.25px;line-height:6.25px;height:6.25px;font-weight:bold;color:#222"><span style="font-size:6.9px;letter-spacing:-0.28px">X</span>轴速度均方根值<span style="font-size:6.9px;letter-spacing:-0.28px">(mm/s)</span></div>
  <div class="t" style="left:20.5px;width:90px;text-align:center;font-size:8.7px;top:17.6px;transform:scaleX(0.9);color:#22a83a">8.3</div>
 </div>
 <div style="position:absolute;left:234.8px;top:16.80px;width:111.2px;height:33.9px;background:#f6f6f6;border:0.5px solid #e7e7e7">
  <div style="position:absolute;left:-0.5px;top:-0.5px;width:20.9px;height:33.9px;background:#46a96c"><svg style="position:absolute;left:3.6px;top:8.6px" width="14" height="16" viewBox="0 0 28 32"><g fill="none" stroke="#fff" stroke-width="2.2" stroke-linecap="butt"><path d="M4.2 14.8 A9.8 9.8 0 0 1 23.8 14.8"/><path d="M8.6 14.8 A5.4 5.4 0 0 1 19.4 14.8"/><path d="M14 12.6V19" stroke-width="1.8"/></g><rect x="0.8" y="18.8" width="26.6" height="11.4" rx="1.8" fill="#fff"/><rect x="4.6" y="23.4" width="2.2" height="2.2" fill="#46a96c"/><rect x="9.6" y="23.4" width="2.2" height="2.2" fill="#46a96c"/></svg></div><svg style="position:absolute;left:101.8px;top:2.2px" width="6.2" height="6.2" viewBox="0 0 11 11" fill="none" stroke="#1a1a1a" stroke-width="2.1"><circle cx="4.4" cy="4.4" r="3.2"/><path d="M6.8 6.8L10.2 10.2" stroke-linecap="round"/></svg>
  <div class="t" style="left:20.5px;width:90px;text-align:center;top:8.5px;font-size:6.25px;line-height:6.25px;height:6.25px;font-weight:bold;color:#222"><span style="font-size:6.9px;letter-spacing:-0.28px">Y</span>轴速度均方根值<span style="font-size:6.9px;letter-spacing:-0.28px">(mm/s)</span></div>
  <div class="t" style="left:20.5px;width:90px;text-align:center;font-size:8.7px;top:17.6px;transform:scaleX(0.9);color:#22a83a">7.9</div>
 </div>
 <div style="position:absolute;left:350.8px;top:16.80px;width:111.2px;height:33.9px;background:#f6f6f6;border:0.5px solid #e7e7e7">
  <div style="position:absolute;left:-0.5px;top:-0.5px;width:20.9px;height:33.9px;background:#46a96c"><svg style="position:absolute;left:3.6px;top:8.6px" width="14" height="16" viewBox="0 0 28 32"><g fill="none" stroke="#fff" stroke-width="2.2" stroke-linecap="butt"><path d="M4.2 14.8 A9.8 9.8 0 0 1 23.8 14.8"/><path d="M8.6 14.8 A5.4 5.4 0 0 1 19.4 14.8"/><path d="M14 12.6V19" stroke-width="1.8"/></g><rect x="0.8" y="18.8" width="26.6" height="11.4" rx="1.8" fill="#fff"/><rect x="4.6" y="23.4" width="2.2" height="2.2" fill="#46a96c"/><rect x="9.6" y="23.4" width="2.2" height="2.2" fill="#46a96c"/></svg></div><svg style="position:absolute;left:101.8px;top:2.2px" width="6.2" height="6.2" viewBox="0 0 11 11" fill="none" stroke="#1a1a1a" stroke-width="2.1"><circle cx="4.4" cy="4.4" r="3.2"/><path d="M6.8 6.8L10.2 10.2" stroke-linecap="round"/></svg>
  <div class="t" style="left:20.5px;width:90px;text-align:center;top:8.5px;font-size:6.25px;line-height:6.25px;height:6.25px;font-weight:bold;color:#222"><span style="font-size:6.9px;letter-spacing:-0.28px">Z</span>轴速度均方根值<span style="font-size:6.9px;letter-spacing:-0.28px">(mm/s)</span></div>
  <div class="t" style="left:20.5px;width:90px;text-align:center;font-size:8.7px;top:17.6px;transform:scaleX(0.9);color:#22a83a">8.6</div>
 </div>
 <div style="position:absolute;left:466.8px;top:16.80px;width:111.2px;height:33.9px;background:#f6f6f6;border:0.5px solid #e7e7e7">
  <div style="position:absolute;left:-0.5px;top:-0.5px;width:20.9px;height:33.9px;background:#46a96c"><svg style="position:absolute;left:3.6px;top:8.6px" width="14" height="16" viewBox="0 0 28 32"><g fill="none" stroke="#fff" stroke-width="2.2" stroke-linecap="butt"><path d="M4.2 14.8 A9.8 9.8 0 0 1 23.8 14.8"/><path d="M8.6 14.8 A5.4 5.4 0 0 1 19.4 14.8"/><path d="M14 12.6V19" stroke-width="1.8"/></g><rect x="0.8" y="18.8" width="26.6" height="11.4" rx="1.8" fill="#fff"/><rect x="4.6" y="23.4" width="2.2" height="2.2" fill="#46a96c"/><rect x="9.6" y="23.4" width="2.2" height="2.2" fill="#46a96c"/></svg></div><svg style="position:absolute;left:101.8px;top:2.2px" width="6.2" height="6.2" viewBox="0 0 11 11" fill="none" stroke="#1a1a1a" stroke-width="2.1"><circle cx="4.4" cy="4.4" r="3.2"/><path d="M6.8 6.8L10.2 10.2" stroke-linecap="round"/></svg>
  <div class="t" style="left:20.5px;width:90px;text-align:center;top:8.5px;font-size:6.25px;line-height:6.25px;height:6.25px;font-weight:bold;color:#222"><span style="font-size:6.9px;letter-spacing:-0.28px">X</span>轴位移均方根值<span style="font-size:6.9px;letter-spacing:-0.28px">(μm)</span></div>
  <div class="t" style="left:20.5px;width:90px;text-align:center;font-size:8.7px;top:17.6px;transform:scaleX(0.9);color:#22a83a">37.6</div>
 </div>
 <div style="position:absolute;left:582.8px;top:16.80px;width:111.2px;height:33.9px;background:#f6f6f6;border:0.5px solid #e7e7e7">
  <div style="position:absolute;left:-0.5px;top:-0.5px;width:20.9px;height:33.9px;background:#46a96c"><svg style="position:absolute;left:3.6px;top:8.6px" width="14" height="16" viewBox="0 0 28 32"><g fill="none" stroke="#fff" stroke-width="2.2" stroke-linecap="butt"><path d="M4.2 14.8 A9.8 9.8 0 0 1 23.8 14.8"/><path d="M8.6 14.8 A5.4 5.4 0 0 1 19.4 14.8"/><path d="M14 12.6V19" stroke-width="1.8"/></g><rect x="0.8" y="18.8" width="26.6" height="11.4" rx="1.8" fill="#fff"/><rect x="4.6" y="23.4" width="2.2" height="2.2" fill="#46a96c"/><rect x="9.6" y="23.4" width="2.2" height="2.2" fill="#46a96c"/></svg></div><svg style="position:absolute;left:101.8px;top:2.2px" width="6.2" height="6.2" viewBox="0 0 11 11" fill="none" stroke="#1a1a1a" stroke-width="2.1"><circle cx="4.4" cy="4.4" r="3.2"/><path d="M6.8 6.8L10.2 10.2" stroke-linecap="round"/></svg>
  <div class="t" style="left:20.5px;width:90px;text-align:center;top:8.5px;font-size:6.25px;line-height:6.25px;height:6.25px;font-weight:bold;color:#222"><span style="font-size:6.9px;letter-spacing:-0.28px">Y</span>轴位移均方根值<span style="font-size:6.9px;letter-spacing:-0.28px">(μm)</span></div>
  <div class="t" style="left:20.5px;width:90px;text-align:center;font-size:8.7px;top:17.6px;transform:scaleX(0.9);color:#22a83a">38.1</div>
 </div>
 <div style="position:absolute;left:2.8px;top:55.25px;width:111.2px;height:33.9px;background:#f6f6f6;border:0.5px solid #e7e7e7">
  <div style="position:absolute;left:-0.5px;top:-0.5px;width:20.9px;height:33.9px;background:#46a96c"><svg style="position:absolute;left:3.6px;top:8.6px" width="14" height="16" viewBox="0 0 28 32"><g fill="none" stroke="#fff" stroke-width="2.2" stroke-linecap="butt"><path d="M4.2 14.8 A9.8 9.8 0 0 1 23.8 14.8"/><path d="M8.6 14.8 A5.4 5.4 0 0 1 19.4 14.8"/><path d="M14 12.6V19" stroke-width="1.8"/></g><rect x="0.8" y="18.8" width="26.6" height="11.4" rx="1.8" fill="#fff"/><rect x="4.6" y="23.4" width="2.2" height="2.2" fill="#46a96c"/><rect x="9.6" y="23.4" width="2.2" height="2.2" fill="#46a96c"/></svg></div><svg style="position:absolute;left:101.8px;top:2.2px" width="6.2" height="6.2" viewBox="0 0 11 11" fill="none" stroke="#1a1a1a" stroke-width="2.1"><circle cx="4.4" cy="4.4" r="3.2"/><path d="M6.8 6.8L10.2 10.2" stroke-linecap="round"/></svg>
  <div class="t" style="left:20.5px;width:90px;text-align:center;top:8.5px;font-size:6.25px;line-height:6.25px;height:6.25px;font-weight:bold;color:#222"><span style="font-size:6.9px;letter-spacing:-0.28px">Z</span>轴位移均方根值<span style="font-size:6.9px;letter-spacing:-0.28px">(μm)</span></div>
  <div class="t" style="left:20.5px;width:90px;text-align:center;font-size:8.7px;top:17.6px;transform:scaleX(0.9);color:#22a83a">34.5</div>
 </div>
 <div style="position:absolute;left:118.8px;top:55.25px;width:111.2px;height:33.9px;background:#f6f6f6;border:0.5px solid #e7e7e7">
  <div style="position:absolute;left:-0.5px;top:-0.5px;width:20.9px;height:33.9px;background:#46a96c"><svg style="position:absolute;left:3.6px;top:8.6px" width="14" height="16" viewBox="0 0 28 32"><g fill="none" stroke="#fff" stroke-width="2.2" stroke-linecap="butt"><path d="M4.2 14.8 A9.8 9.8 0 0 1 23.8 14.8"/><path d="M8.6 14.8 A5.4 5.4 0 0 1 19.4 14.8"/><path d="M14 12.6V19" stroke-width="1.8"/></g><rect x="0.8" y="18.8" width="26.6" height="11.4" rx="1.8" fill="#fff"/><rect x="4.6" y="23.4" width="2.2" height="2.2" fill="#46a96c"/><rect x="9.6" y="23.4" width="2.2" height="2.2" fill="#46a96c"/></svg></div><svg style="position:absolute;left:101.8px;top:2.2px" width="6.2" height="6.2" viewBox="0 0 11 11" fill="none" stroke="#1a1a1a" stroke-width="2.1"><circle cx="4.4" cy="4.4" r="3.2"/><path d="M6.8 6.8L10.2 10.2" stroke-linecap="round"/></svg>
  <div class="t" style="left:20.5px;width:90px;text-align:center;top:8.5px;font-size:6.25px;line-height:6.25px;height:6.25px;font-weight:bold;color:#222"><span style="font-size:6.9px;letter-spacing:-0.28px">X</span>轴加速度均方根值<span style="font-size:6.9px;letter-spacing:-0.28px">(mm/s2)</span></div>
  <div class="t" style="left:20.5px;width:90px;text-align:center;font-size:8.7px;top:17.6px;transform:scaleX(0.9);color:#22a83a">4.8</div>
 </div>
 <div style="position:absolute;left:234.8px;top:55.25px;width:111.2px;height:33.9px;background:#f6f6f6;border:0.5px solid #e7e7e7">
  <div style="position:absolute;left:-0.5px;top:-0.5px;width:20.9px;height:33.9px;background:#46a96c"><svg style="position:absolute;left:3.6px;top:8.6px" width="14" height="16" viewBox="0 0 28 32"><g fill="none" stroke="#fff" stroke-width="2.2" stroke-linecap="butt"><path d="M4.2 14.8 A9.8 9.8 0 0 1 23.8 14.8"/><path d="M8.6 14.8 A5.4 5.4 0 0 1 19.4 14.8"/><path d="M14 12.6V19" stroke-width="1.8"/></g><rect x="0.8" y="18.8" width="26.6" height="11.4" rx="1.8" fill="#fff"/><rect x="4.6" y="23.4" width="2.2" height="2.2" fill="#46a96c"/><rect x="9.6" y="23.4" width="2.2" height="2.2" fill="#46a96c"/></svg></div><svg style="position:absolute;left:101.8px;top:2.2px" width="6.2" height="6.2" viewBox="0 0 11 11" fill="none" stroke="#1a1a1a" stroke-width="2.1"><circle cx="4.4" cy="4.4" r="3.2"/><path d="M6.8 6.8L10.2 10.2" stroke-linecap="round"/></svg>
  <div class="t" style="left:20.5px;width:90px;text-align:center;top:8.5px;font-size:6.25px;line-height:6.25px;height:6.25px;font-weight:bold;color:#222"><span style="font-size:6.9px;letter-spacing:-0.28px">Y</span>轴加速度均方根值<span style="font-size:6.9px;letter-spacing:-0.28px">(mm/s2)</span></div>
  <div class="t" style="left:20.5px;width:90px;text-align:center;font-size:8.7px;top:17.6px;transform:scaleX(0.9);color:#22a83a">6.7</div>
 </div>
 <div style="position:absolute;left:350.8px;top:55.25px;width:111.2px;height:33.9px;background:#f6f6f6;border:0.5px solid #e7e7e7">
  <div style="position:absolute;left:-0.5px;top:-0.5px;width:20.9px;height:33.9px;background:#46a96c"><svg style="position:absolute;left:3.6px;top:8.6px" width="14" height="16" viewBox="0 0 28 32"><g fill="none" stroke="#fff" stroke-width="2.2" stroke-linecap="butt"><path d="M4.2 14.8 A9.8 9.8 0 0 1 23.8 14.8"/><path d="M8.6 14.8 A5.4 5.4 0 0 1 19.4 14.8"/><path d="M14 12.6V19" stroke-width="1.8"/></g><rect x="0.8" y="18.8" width="26.6" height="11.4" rx="1.8" fill="#fff"/><rect x="4.6" y="23.4" width="2.2" height="2.2" fill="#46a96c"/><rect x="9.6" y="23.4" width="2.2" height="2.2" fill="#46a96c"/></svg></div><svg style="position:absolute;left:101.8px;top:2.2px" width="6.2" height="6.2" viewBox="0 0 11 11" fill="none" stroke="#1a1a1a" stroke-width="2.1"><circle cx="4.4" cy="4.4" r="3.2"/><path d="M6.8 6.8L10.2 10.2" stroke-linecap="round"/></svg>
  <div class="t" style="left:20.5px;width:90px;text-align:center;top:8.5px;font-size:6.25px;line-height:6.25px;height:6.25px;font-weight:bold;color:#222"><span style="font-size:6.9px;letter-spacing:-0.28px">Z</span>轴加速度均方根值<span style="font-size:6.9px;letter-spacing:-0.28px">(mm/s2)</span></div>
  <div class="t" style="left:20.5px;width:90px;text-align:center;font-size:8.7px;top:17.6px;transform:scaleX(0.9);color:#22a83a">5.2</div>
 </div>
 <div style="position:absolute;left:466.8px;top:55.25px;width:111.2px;height:33.9px;background:#f6f6f6;border:0.5px solid #e7e7e7">
  <div style="position:absolute;left:-0.5px;top:-0.5px;width:20.9px;height:33.9px;background:#46a96c"><svg style="position:absolute;left:3.6px;top:8.6px" width="14" height="16" viewBox="0 0 28 32"><g fill="none" stroke="#fff" stroke-width="2.2" stroke-linecap="butt"><path d="M4.2 14.8 A9.8 9.8 0 0 1 23.8 14.8"/><path d="M8.6 14.8 A5.4 5.4 0 0 1 19.4 14.8"/><path d="M14 12.6V19" stroke-width="1.8"/></g><rect x="0.8" y="18.8" width="26.6" height="11.4" rx="1.8" fill="#fff"/><rect x="4.6" y="23.4" width="2.2" height="2.2" fill="#46a96c"/><rect x="9.6" y="23.4" width="2.2" height="2.2" fill="#46a96c"/></svg></div><svg style="position:absolute;left:101.8px;top:2.2px" width="6.2" height="6.2" viewBox="0 0 11 11" fill="none" stroke="#1a1a1a" stroke-width="2.1"><circle cx="4.4" cy="4.4" r="3.2"/><path d="M6.8 6.8L10.2 10.2" stroke-linecap="round"/></svg>
  <div class="t" style="left:20.5px;width:90px;text-align:center;top:8.5px;font-size:6.25px;line-height:6.25px;height:6.25px;font-weight:bold;color:#222"><span style="font-size:6.9px;letter-spacing:-0.28px">X</span>轴速度最大值<span style="font-size:6.9px;letter-spacing:-0.28px">(mm/s)</span></div>
  <div class="t" style="left:20.5px;width:90px;text-align:center;font-size:8.7px;top:17.6px;transform:scaleX(0.9);color:#22a83a">9.1</div>
 </div>
 <div style="position:absolute;left:582.8px;top:55.25px;width:111.2px;height:33.9px;background:#f6f6f6;border:0.5px solid #e7e7e7">
  <div style="position:absolute;left:-0.5px;top:-0.5px;width:20.9px;height:33.9px;background:#46a96c"><svg style="position:absolute;left:3.6px;top:8.6px" width="14" height="16" viewBox="0 0 28 32"><g fill="none" stroke="#fff" stroke-width="2.2" stroke-linecap="butt"><path d="M4.2 14.8 A9.8 9.8 0 0 1 23.8 14.8"/><path d="M8.6 14.8 A5.4 5.4 0 0 1 19.4 14.8"/><path d="M14 12.6V19" stroke-width="1.8"/></g><rect x="0.8" y="18.8" width="26.6" height="11.4" rx="1.8" fill="#fff"/><rect x="4.6" y="23.4" width="2.2" height="2.2" fill="#46a96c"/><rect x="9.6" y="23.4" width="2.2" height="2.2" fill="#46a96c"/></svg></div><svg style="position:absolute;left:101.8px;top:2.2px" width="6.2" height="6.2" viewBox="0 0 11 11" fill="none" stroke="#1a1a1a" stroke-width="2.1"><circle cx="4.4" cy="4.4" r="3.2"/><path d="M6.8 6.8L10.2 10.2" stroke-linecap="round"/></svg>
  <div class="t" style="left:20.5px;width:90px;text-align:center;top:8.5px;font-size:6.25px;line-height:6.25px;height:6.25px;font-weight:bold;color:#222"><span style="font-size:6.9px;letter-spacing:-0.28px">X</span>轴加速度最大值<span style="font-size:6.9px;letter-spacing:-0.28px">(mm/s2)</span></div>
  <div class="t" style="left:20.5px;width:90px;text-align:center;font-size:8.7px;top:17.6px;transform:scaleX(0.9);color:#22a83a">7.9</div>
 </div>
 <div style="position:absolute;left:2.8px;top:93.70px;width:111.2px;height:33.9px;background:#f6f6f6;border:0.5px solid #e7e7e7">
  <div style="position:absolute;left:-0.5px;top:-0.5px;width:20.9px;height:33.9px;background:#46a96c"><svg style="position:absolute;left:3.6px;top:8.6px" width="14" height="16" viewBox="0 0 28 32"><g fill="none" stroke="#fff" stroke-width="2.2" stroke-linecap="butt"><path d="M4.2 14.8 A9.8 9.8 0 0 1 23.8 14.8"/><path d="M8.6 14.8 A5.4 5.4 0 0 1 19.4 14.8"/><path d="M14 12.6V19" stroke-width="1.8"/></g><rect x="0.8" y="18.8" width="26.6" height="11.4" rx="1.8" fill="#fff"/><rect x="4.6" y="23.4" width="2.2" height="2.2" fill="#46a96c"/><rect x="9.6" y="23.4" width="2.2" height="2.2" fill="#46a96c"/></svg></div><svg style="position:absolute;left:101.8px;top:2.2px" width="6.2" height="6.2" viewBox="0 0 11 11" fill="none" stroke="#1a1a1a" stroke-width="2.1"><circle cx="4.4" cy="4.4" r="3.2"/><path d="M6.8 6.8L10.2 10.2" stroke-linecap="round"/></svg>
  <div class="t" style="left:20.5px;width:90px;text-align:center;top:8.5px;font-size:6.25px;line-height:6.25px;height:6.25px;font-weight:bold;color:#222"><span style="font-size:6.9px;letter-spacing:-0.28px">X</span>轴诊断状态<span style="font-size:6.9px;letter-spacing:-0.28px">(</span>℃<span style="font-size:6.9px;letter-spacing:-0.28px">)</span></div>
  <div class="t" style="left:20.5px;width:90px;text-align:center;font-size:7.9px;top:18.3px;color:#22a83a">无故障</div>
 </div>
 <div style="position:absolute;left:118.8px;top:93.70px;width:111.2px;height:33.9px;background:#f6f6f6;border:0.5px solid #e7e7e7">
  <div style="position:absolute;left:-0.5px;top:-0.5px;width:20.9px;height:33.9px;background:#46a96c"><svg style="position:absolute;left:3.6px;top:8.6px" width="14" height="16" viewBox="0 0 28 32"><g fill="none" stroke="#fff" stroke-width="2.2" stroke-linecap="butt"><path d="M4.2 14.8 A9.8 9.8 0 0 1 23.8 14.8"/><path d="M8.6 14.8 A5.4 5.4 0 0 1 19.4 14.8"/><path d="M14 12.6V19" stroke-width="1.8"/></g><rect x="0.8" y="18.8" width="26.6" height="11.4" rx="1.8" fill="#fff"/><rect x="4.6" y="23.4" width="2.2" height="2.2" fill="#46a96c"/><rect x="9.6" y="23.4" width="2.2" height="2.2" fill="#46a96c"/></svg></div><svg style="position:absolute;left:101.8px;top:2.2px" width="6.2" height="6.2" viewBox="0 0 11 11" fill="none" stroke="#1a1a1a" stroke-width="2.1"><circle cx="4.4" cy="4.4" r="3.2"/><path d="M6.8 6.8L10.2 10.2" stroke-linecap="round"/></svg>
  <div class="t" style="left:20.5px;width:90px;text-align:center;top:8.5px;font-size:6.25px;line-height:6.25px;height:6.25px;font-weight:bold;color:#222"><span style="font-size:6.9px;letter-spacing:-0.28px">Y</span>轴诊断状态<span style="font-size:6.9px;letter-spacing:-0.28px">(%)</span></div>
  <div class="t" style="left:20.5px;width:90px;text-align:center;font-size:7.9px;top:18.3px;color:#22a83a">无故障</div>
 </div>
 <div style="position:absolute;left:234.8px;top:93.70px;width:111.2px;height:33.9px;background:#f6f6f6;border:0.5px solid #e7e7e7">
  <div style="position:absolute;left:-0.5px;top:-0.5px;width:20.9px;height:33.9px;background:#46a96c"><svg style="position:absolute;left:3.6px;top:8.6px" width="14" height="16" viewBox="0 0 28 32"><g fill="none" stroke="#fff" stroke-width="2.2" stroke-linecap="butt"><path d="M4.2 14.8 A9.8 9.8 0 0 1 23.8 14.8"/><path d="M8.6 14.8 A5.4 5.4 0 0 1 19.4 14.8"/><path d="M14 12.6V19" stroke-width="1.8"/></g><rect x="0.8" y="18.8" width="26.6" height="11.4" rx="1.8" fill="#fff"/><rect x="4.6" y="23.4" width="2.2" height="2.2" fill="#46a96c"/><rect x="9.6" y="23.4" width="2.2" height="2.2" fill="#46a96c"/></svg></div><svg style="position:absolute;left:101.8px;top:2.2px" width="6.2" height="6.2" viewBox="0 0 11 11" fill="none" stroke="#1a1a1a" stroke-width="2.1"><circle cx="4.4" cy="4.4" r="3.2"/><path d="M6.8 6.8L10.2 10.2" stroke-linecap="round"/></svg>
  <div class="t" style="left:20.5px;width:90px;text-align:center;top:8.5px;font-size:6.25px;line-height:6.25px;height:6.25px;font-weight:bold;color:#222"><span style="font-size:6.9px;letter-spacing:-0.28px">Z</span>轴诊断状态</div>
  <div class="t" style="left:20.5px;width:90px;text-align:center;font-size:7.9px;top:18.3px;color:#22a83a">无故障</div>
 </div>
 <div style="position:absolute;left:350.8px;top:93.70px;width:111.2px;height:33.9px;background:#f6f6f6;border:0.5px solid #e7e7e7">
  <div style="position:absolute;left:-0.5px;top:-0.5px;width:20.9px;height:33.9px;background:#46a96c"><svg style="position:absolute;left:3.6px;top:8.6px" width="14" height="16" viewBox="0 0 28 32"><g fill="none" stroke="#fff" stroke-width="2.2" stroke-linecap="butt"><path d="M4.2 14.8 A9.8 9.8 0 0 1 23.8 14.8"/><path d="M8.6 14.8 A5.4 5.4 0 0 1 19.4 14.8"/><path d="M14 12.6V19" stroke-width="1.8"/></g><rect x="0.8" y="18.8" width="26.6" height="11.4" rx="1.8" fill="#fff"/><rect x="4.6" y="23.4" width="2.2" height="2.2" fill="#46a96c"/><rect x="9.6" y="23.4" width="2.2" height="2.2" fill="#46a96c"/></svg></div><svg style="position:absolute;left:101.8px;top:2.2px" width="6.2" height="6.2" viewBox="0 0 11 11" fill="none" stroke="#1a1a1a" stroke-width="2.1"><circle cx="4.4" cy="4.4" r="3.2"/><path d="M6.8 6.8L10.2 10.2" stroke-linecap="round"/></svg>
  <div class="t" style="left:20.5px;width:90px;text-align:center;top:8.5px;font-size:6.25px;line-height:6.25px;height:6.25px;font-weight:bold;color:#222">温度预警报警状态</div>
  <div class="t" style="left:20.5px;width:90px;text-align:center;font-size:7.9px;top:18.3px;color:#22a83a">无预警</div>
 </div>
</div>
<div class="t" style="left:697.5px;top:374.6px;font-size:9px;color:#b4b4b4">激活 Windows</div>
<div class="t" style="left:697.5px;top:387.4px;font-size:6.3px;color:#b9b9b9">转到<span style="margin:0 0.7px 0 0.9px">“</span>设置<span style="margin:0 0.9px 0 0.7px">”</span>以激活 <span style="font-size:6.9px">Windows</span>。</div>
<div style="left:86px;top:414.4px;width:714px;height:1.6px;background:#6e6e6e"></div>
<!--FOOT-->
</div>
</body>
</html>
